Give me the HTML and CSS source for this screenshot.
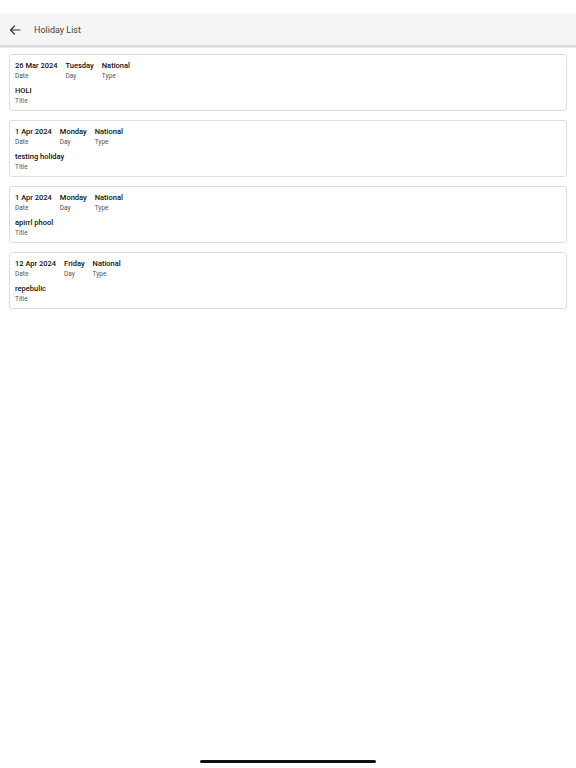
FILE: index.html
```html
<!DOCTYPE html>
<html>
<head>
<meta charset="utf-8">
<link rel="stylesheet" href="styles.css">
</head>
<body>
<div class="status"></div>
<header class="appbar">
  <svg class="back" width="12" height="10" viewBox="0 0 12 10"><path d="M11 5H1.5M5.5 1L1.5 5L5.5 9" fill="none" stroke="#333" stroke-width="1.2" stroke-linecap="round" stroke-linejoin="round"/></svg>
  <span class="title">Holiday List</span>
</header>
<main class="list">
  <div class="card">
    <div class="row">
      <div class="field"><div class="value">26 Mar 2024</div><div class="label">Date</div></div>
      <div class="field"><div class="value">Tuesday</div><div class="label">Day</div></div>
      <div class="field"><div class="value">National</div><div class="label">Type</div></div>
    </div>
    <div class="field titlefield"><div class="value">HOLI</div><div class="label">Title</div></div>
  </div>
  <div class="card">
    <div class="row">
      <div class="field"><div class="value">1 Apr 2024</div><div class="label">Date</div></div>
      <div class="field"><div class="value">Monday</div><div class="label">Day</div></div>
      <div class="field"><div class="value">National</div><div class="label">Type</div></div>
    </div>
    <div class="field titlefield"><div class="value">testing holiday</div><div class="label">Title</div></div>
  </div>
  <div class="card">
    <div class="row">
      <div class="field"><div class="value">1 Apr 2024</div><div class="label">Date</div></div>
      <div class="field"><div class="value">Monday</div><div class="label">Day</div></div>
      <div class="field"><div class="value">National</div><div class="label">Type</div></div>
    </div>
    <div class="field titlefield"><div class="value">apirrl phool</div><div class="label">Title</div></div>
  </div>
  <div class="card">
    <div class="row">
      <div class="field"><div class="value">12 Apr 2024</div><div class="label">Date</div></div>
      <div class="field"><div class="value">Friday</div><div class="label">Day</div></div>
      <div class="field"><div class="value">National</div><div class="label">Type</div></div>
    </div>
    <div class="field titlefield"><div class="value">repebulic</div><div class="label">Title</div></div>
  </div>
</main>
<div class="home-indicator"></div>
</body>
</html>
```
FILE: styles.css
```css
html, body {
  margin: 0;
  padding: 0;
  background: #fff;
  font-family: Roboto, "Liberation Sans", sans-serif;
  color: #111;
}
body {
  width: 576px;
  height: 768px;
  position: relative;
  overflow: hidden;
}
.status {
  height: 14px;
}
.appbar {
  height: 31px;
  background: #f5f5f5;
  display: flex;
  align-items: center;
  padding-left: 9px;
  box-shadow: 0 1px 1px rgba(0,0,0,0.12), 0 2px 1px rgba(0,0,0,0.05);
  border-bottom: 1px solid #e2e2e2;
}
.back {
  display: block;
}
.title {
  margin-left: 13px;
  font-size: 9px;
  color: #444;
  line-height: 12px;
}
.list {
  padding: 8px 9px 0 9px;
}
.card {
  border: 1px solid #dedede;
  border-radius: 3px;
  padding: 6px 6px 5px 5px;
  margin-bottom: 9px;
  height: 44px;
}
.row {
  display: flex;
  gap: 8px;
}
.value {
  font-size: 7.5px;
  font-weight: 500;
  line-height: 10px;
  color: #111;
}
.label {
  font-size: 6.5px;
  line-height: 8px;
  margin-top: 1px;
  color: #555;
}
.titlefield {
  margin-top: 6px;
}
.home-indicator {
  position: absolute;
  left: 200px;
  width: 176px;
  top: 760px;
  height: 3px;
  border-radius: 2px;
  background: #111;
}
```
